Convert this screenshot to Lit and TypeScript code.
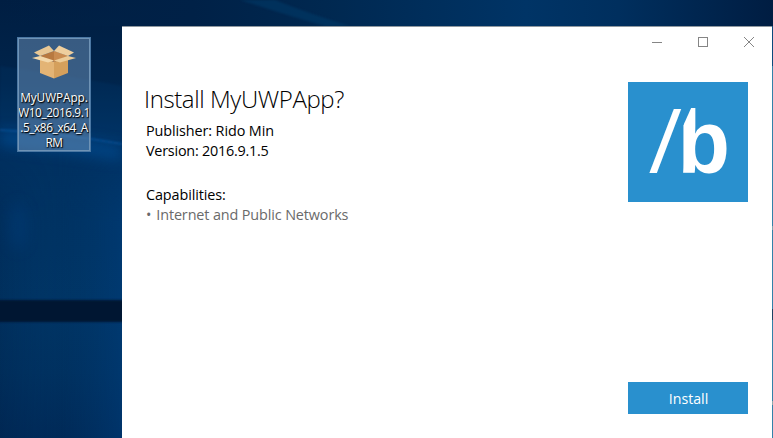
import { LitElement, html, css } from "lit";
import { customElement } from "lit/decorators.js";

@customElement("desktop-wallpaper")
class DesktopWallpaper extends LitElement {
  static styles = css`
    :host { display: block; }
    svg { display: block; width: 773px; height: 438px; }
  `;
  render() {
    return html`<svg viewBox="0 0 773 438" preserveAspectRatio="none">
      <defs>
        <linearGradient id="base" x1="0" y1="0" x2="0" y2="1">
          <stop offset="0" stop-color="#001e42" />
          <stop offset="0.18" stop-color="#00244b" />
          <stop offset="0.3" stop-color="#003060" />
          <stop offset="0.68" stop-color="#003565" />
          <stop offset="0.85" stop-color="#003160" />
          <stop offset="1" stop-color="#002a58" />
        </linearGradient>
        <linearGradient id="top" x1="0" y1="0" x2="1" y2="0">
          <stop offset="0" stop-color="#002147" stop-opacity="0" />
          <stop offset="0.25" stop-color="#002147" />
          <stop offset="0.42" stop-color="#002850" />
          <stop offset="0.68" stop-color="#003466" />
          <stop offset="0.8" stop-color="#002f5e" />
          <stop offset="1" stop-color="#001d42" />
        </linearGradient>
        <linearGradient id="side" x1="0" y1="0" x2="1" y2="0">
          <stop offset="0" stop-color="#001c40" stop-opacity="0.2" />
          <stop offset="0.5" stop-color="#003a70" stop-opacity="0" />
          <stop offset="1" stop-color="#003e7c" stop-opacity="0.5" />
        </linearGradient>
        <linearGradient id="fade" x1="0" y1="0" x2="0" y2="1">
          <stop offset="0" stop-color="#fff" stop-opacity="0" />
          <stop offset="0.3" stop-color="#fff" />
        </linearGradient>
        <mask id="sidemask"><rect y="130" width="122" height="308" fill="url(#fade)" /></mask>
        <filter id="soft" x="-50%" y="-50%" width="200%" height="200%"><feGaussianBlur stdDeviation="7" /></filter>
        <filter id="fine" x="-5%" y="-50%" width="110%" height="200%"><feGaussianBlur stdDeviation="1.2" /></filter>
      </defs>
      <rect width="773" height="438" fill="url(#base)" />
      <rect y="130" width="122" height="308" fill="url(#side)" mask="url(#sidemask)" />
      <path d="M0 66Q60 74 122 86V140Q60 130 0 126Z" fill="#003a70" opacity="0.22" filter="url(#fine)" />
      <path d="M0 130Q60 134 122 146V160Q60 150 0 146Z" fill="#0058a8" opacity="0.5" filter="url(#soft)" />
      <path d="M0 130Q60 133 122 144" fill="none" stroke="#0a5eae" stroke-width="2" opacity="0.5" filter="url(#fine)" />
      <ellipse cx="18" cy="226" rx="10" ry="24" fill="#004385" opacity="0.3" filter="url(#soft)" />
      <rect width="773" height="26" fill="url(#top)" />
      <path d="M240 0H275Q310 14 350 26H325Q290 16 240 0Z" fill="#00406f" opacity="0.45" filter="url(#fine)" />
      <rect x="-5" y="300" width="132" height="22" fill="#001733" filter="url(#fine)" />
      <rect x="772" y="26" width="1" height="40" fill="#0c4a7c" />
      <rect x="772" y="66" width="1" height="372" fill="#3381a9" />
      <rect x="772" y="226" width="1" height="4" fill="#7ba3b0" />
      <rect x="772" y="309" width="1" height="11" fill="#1d4263" />
      <rect x="772" y="401" width="1" height="4" fill="#8fa9ab" />
    </svg>`;
  }
}

@customElement("desktop-icon")
class DesktopIcon extends LitElement {
  static properties = { lines: { attribute: false } };
  declare lines: string[];
  static styles = css`
    :host {
      display: flex; flex-direction: column; align-items: center;
      box-sizing: border-box; width: 74px; height: 115px;
      border: 1px solid #4a77a3; outline: 1px solid #6f93b5; outline-offset: -2px;
      background: rgba(112, 150, 190, 0.5);
      font: 11.8px/15px "Open Sans", "Noto Sans", sans-serif; color: #fff;
    }
    .box { width: 44px; height: 35px; margin-top: 7px; flex: none; }
    .label { margin-top: 10px; display: flex; flex-direction: column; align-items: center;
      white-space: nowrap; letter-spacing: -0.38px;
      text-shadow: 1px 1px 1px #000, 0 1px 2px rgba(0,0,0,.8); }
    .label span:first-child { letter-spacing: -0.05px; }
  `;
  render() {
    return html`<svg class="box" viewBox="0 0 44 35">
        <path d="M8 11L22 6L36 11L22 17Z" fill="#b87940" />
        <path d="M22 6L36 11L22 17Z" fill="#c98b50" />
        <path d="M8 11L22 17V33.5L8 28Z" fill="#e3b475" />
        <path d="M36 11L22 17V33.5L36 28Z" fill="#d5a05c" />
        <path d="M8 11L2 7.5L17 0.5L22 6Z" fill="#e8c794" />
        <path d="M36 11L42 7.5L27 0.5L22 6Z" fill="#efcf9e" />
        <path d="M8 11L22 15.5L16 17.5L0 13Z" fill="#f3d8aa" />
        <path d="M36 11L22 15.5L28 17.5L44 13Z" fill="#edcc98" />
      </svg>
      <div class="label">${this.lines.map((l) => html`<span>${l}</span>`)}</div>`;
  }
}

@customElement("app-logo")
class AppLogo extends LitElement {
  static styles = css`
    :host { display: block; width: 120px; height: 120px; background: #2990ce; }
    svg { display: block; overflow: visible; }
    .glyph { fill: #fff; }
    .thin { font-family: "Open Sans", sans-serif; font-weight: 400; }
    .bold { font-family: "Liberation Sans", sans-serif; font-weight: 700; }
  `;
  render() {
    return html`<svg width="120" height="120" viewBox="0 0 120 120">
      <text class="glyph thin" transform="translate(20.5 91) scale(1.02 1)" font-size="90">/</text>
      <text class="glyph bold" transform="translate(49.6 91) scale(.965 1)" font-size="89">b</text>
      <path d="M54 24H64L55.5 43H54Z" fill="#2990ce" />
    </svg>`;
  }
}

@customElement("install-window")
class InstallWindow extends LitElement {
  static styles = css`
    :host {
      display: flex; flex-direction: column; box-sizing: border-box;
      width: 650px; height: 412px; background: #fff; border-top: 1px solid #8f989f;
      color: #000;
    }
    .bar { display: flex; justify-content: flex-end; height: 30px; flex: none; }
    .ctl { width: 46px; height: 30px; fill: none; stroke: #858585; stroke-width: 1; }
    .body { flex: 1; display: flex; justify-content: space-between; padding: 25px 24px 24px 22px; }
    .side { display: flex; flex-direction: column; justify-content: space-between; }
    h1 { margin: 0; font: 300 24px/32px "Open Sans", "Noto Sans", sans-serif; letter-spacing: -0.4px; padding-top: 1px; }
    .info { padding: 6px 0 0 2px; font: 14.4px/20px "Open Sans", "Noto Sans", sans-serif; letter-spacing: -0.1px; }
    .caps { margin-top: 24px; }
    .tight { letter-spacing: -0.23px; }
    .muted { display: flex; gap: 5px; color: #6a6a6a; letter-spacing: -0.12px; }
    button {
      width: 120px; height: 32px; padding: 0 0 0 1px; border: 0; background: #2990ce; color: #fff;
      font: 14.2px/34px "Open Sans", "Noto Sans", sans-serif;
    }
  `;
  render() {
    return html`<div class="bar">
        <svg class="ctl"><path d="M18 15.5H28" /></svg>
        <svg class="ctl"><rect x="18.5" y="10.5" width="9" height="9" /></svg>
        <svg class="ctl"><path d="M18 10L28 20M28 10L18 20" /></svg>
      </div>
      <div class="body">
        <div>
          <h1>Install MyUWPApp?</h1>
          <div class="info">
            <div>Publisher: Rido Min</div>
            <div class="tight">Version: 2016.9.1.5</div>
            <div class="caps">Capabilities:</div>
            <div class="muted"><span>•</span><span>Internet and Public Networks</span></div>
          </div>
        </div>
        <div class="side"><app-logo></app-logo><button>Install</button></div>
      </div>`;
  }
}

@customElement("app-root")
class AppRoot extends LitElement {
  static styles = css`
    :host { display: grid; width: 773px; height: 438px; overflow: hidden; }
    desktop-wallpaper, .desk { grid-area: 1 / 1; }
    .desk { display: flex; gap: 31px; padding-left: 17px; z-index: 1; }
    desktop-icon { margin-top: 37px; }
    install-window { margin-top: 26px; }
  `;
  render() {
    return html`<desktop-wallpaper></desktop-wallpaper>
      <div class="desk">
        <desktop-icon .lines=${["MyUWPApp.", "W10_2016.9.1", ".5_x86_x64_A", "RM"]}></desktop-icon>
        <install-window></install-window>
      </div>`;
  }
}
